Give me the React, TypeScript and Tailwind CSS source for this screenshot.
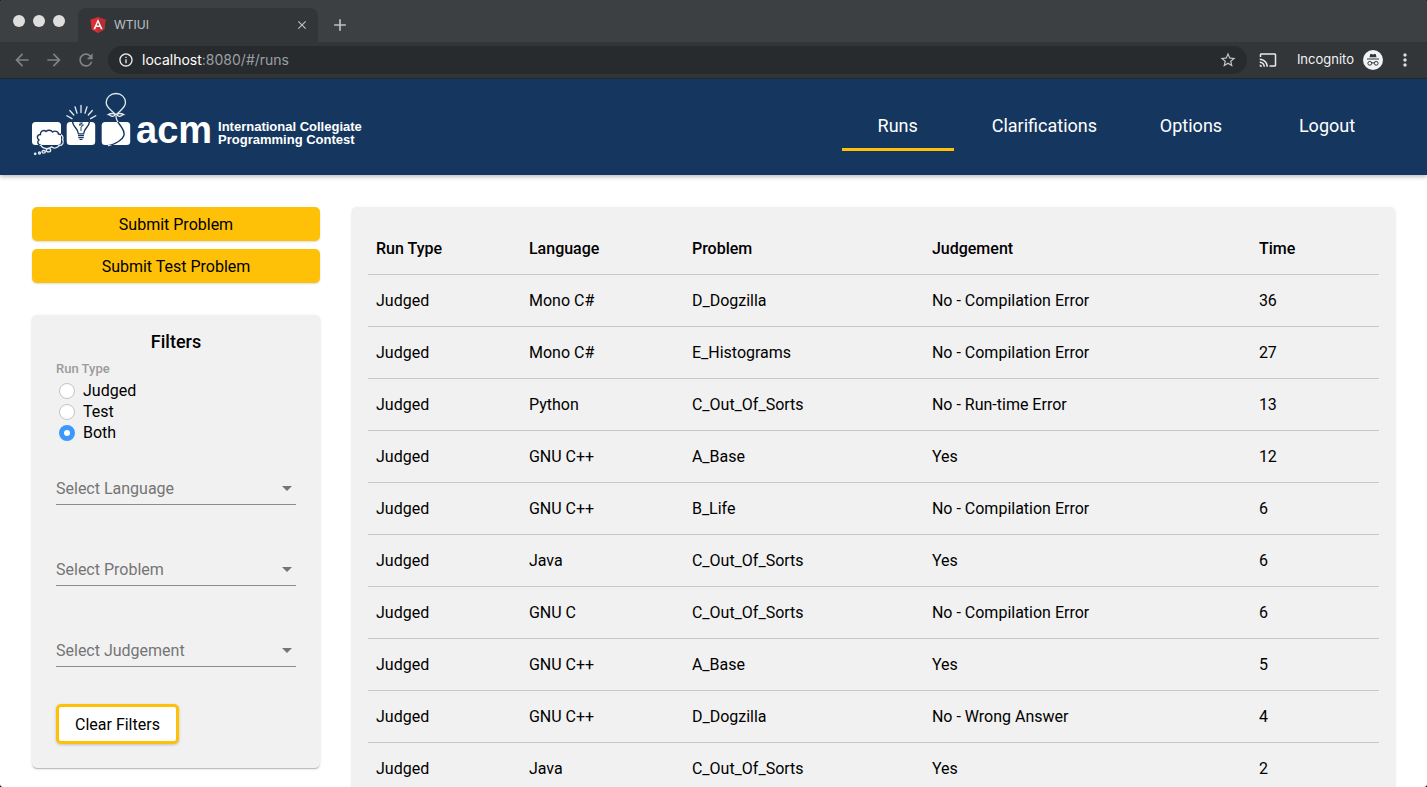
import { useState } from 'react';
import {
  MdAdd,
  MdArrowBack,
  MdArrowForward,
  MdCast,
  MdClose,
  MdInfoOutline,
  MdMoreVert,
  MdRefresh,
  MdStarBorder,
} from 'react-icons/md';

type Run = {
  type: string;
  language: string;
  problem: string;
  judgement: string;
  time: number;
};

const runs: Run[] = [
  { type: 'Judged', language: 'Mono C#', problem: 'D_Dogzilla', judgement: 'No - Compilation Error', time: 36 },
  { type: 'Judged', language: 'Mono C#', problem: 'E_Histograms', judgement: 'No - Compilation Error', time: 27 },
  { type: 'Judged', language: 'Python', problem: 'C_Out_Of_Sorts', judgement: 'No - Run-time Error', time: 13 },
  { type: 'Judged', language: 'GNU C++', problem: 'A_Base', judgement: 'Yes', time: 12 },
  { type: 'Judged', language: 'GNU C++', problem: 'B_Life', judgement: 'No - Compilation Error', time: 6 },
  { type: 'Judged', language: 'Java', problem: 'C_Out_Of_Sorts', judgement: 'Yes', time: 6 },
  { type: 'Judged', language: 'GNU C', problem: 'C_Out_Of_Sorts', judgement: 'No - Compilation Error', time: 6 },
  { type: 'Judged', language: 'GNU C++', problem: 'A_Base', judgement: 'Yes', time: 5 },
  { type: 'Judged', language: 'GNU C++', problem: 'D_Dogzilla', judgement: 'No - Wrong Answer', time: 4 },
  { type: 'Judged', language: 'Java', problem: 'C_Out_Of_Sorts', judgement: 'Yes', time: 2 },
];

const columns = [
  { title: 'Run Type', width: 'w-[15.13%]' },
  { title: 'Language', width: 'w-[16.12%]' },
  { title: 'Problem', width: 'w-[23.74%]' },
  { title: 'Judgement', width: 'w-[32.34%]' },
  { title: 'Time', width: 'w-[12.67%]' },
];

const cardStyle =
  'rounded-[5px] bg-[#f1f1f1] shadow-[0_2px_1px_-1px_rgba(0,0,0,0.12),0_1px_1px_0_rgba(0,0,0,0.1),0_1px_3px_0_rgba(0,0,0,0.12)]';

function AngularIcon() {
  return (
    <svg viewBox="0 0 16 16" className="size-4" aria-hidden="true">
      <path d="M8 0 .5 2.7l1.2 9.8L8 16l6.3-3.5 1.2-9.8z" fill="#dd2c35" />
      <path d="M8 0v16l6.3-3.5 1.2-9.8z" fill="#b92e36" />
      <path d="M8 1.9 3.4 12.2h1.8l.9-2.3h3.8l.9 2.3h1.8zM9.3 8.4H6.7L8 5.2z" fill="#fff" />
    </svg>
  );
}

function IncognitoIcon() {
  return (
    <svg viewBox="0 0 20 20" className="size-5" aria-hidden="true">
      <circle cx="10" cy="10" r="10" fill="#f1f3f4" />
      <path d="M7.3 4h1.2l1.5.4 1.5-.4h1.2l.8 3.3h-7z" fill="#323639" />
      <path d="M4 8.4h12v1.1H4z" fill="#323639" />
      <g fill="none" stroke="#323639" strokeWidth="1">
        <circle cx="6.8" cy="13.3" r="1.9" />
        <circle cx="13.2" cy="13.3" r="1.9" />
        <path d="M8.7 13.1q1.3-.7 2.6 0" />
      </g>
    </svg>
  );
}

function BrowserChrome() {
  return (
    <div className="shrink-0 border-b border-[#26292b] bg-[#323639] font-['Inter',sans-serif]">
      <div className="flex h-[42px] items-end bg-[#3c4042]">
        <div className="flex h-full w-[78px] items-center gap-2 pl-[13px]">
          <span className="size-3 rounded-full bg-[#dedede]" />
          <span className="size-3 rounded-full bg-[#dedede]" />
          <span className="size-3 rounded-full bg-[#dedede]" />
        </div>
        <div className="flex h-[34px] w-60 items-center rounded-t-lg bg-[#323639] pr-2 pl-3">
          <AngularIcon />
          <span className="ml-2 flex-1 text-xs text-[#bdc1c6]">WTIUI</span>
          <button type="button" aria-label="Close tab" className="flex size-4 items-center justify-center text-[#bdc1c6]">
            <MdClose className="size-3.5" />
          </button>
        </div>
        <button
          type="button"
          aria-label="New tab"
          className="flex h-[34px] w-11 items-center justify-center text-[#bdc1c6]"
        >
          <MdAdd className="size-5" />
        </button>
      </div>
      <div className="flex h-9 items-center pr-3 pl-3">
        <div className="flex items-center gap-3 text-[#7f8386]">
          <button type="button" aria-label="Back">
            <MdArrowBack className="size-5" />
          </button>
          <button type="button" aria-label="Forward">
            <MdArrowForward className="size-5" />
          </button>
          <button type="button" aria-label="Reload">
            <MdRefresh className="size-5" />
          </button>
        </div>
        <div className="ml-3 flex h-7 flex-1 items-center rounded-full bg-[#282b2e] px-2.5">
          <MdInfoOutline className="size-4 text-[#e8eaed]" />
          <span className="ml-2 flex-1 text-sm text-[#9aa0a6]">
            <span className="text-white">localhost</span>:8080/#/runs
          </span>
          <button type="button" aria-label="Bookmark" className="text-[#c4c7ca]">
            <MdStarBorder className="size-[18px]" />
          </button>
        </div>
        <MdCast className="ml-3 size-[18px] text-[#e8eaed]" />
        <span className="ml-5 text-[13px] text-[#f1f3f4]">Incognito</span>
        <span className="ml-[9px]">
          <IncognitoIcon />
        </span>
        <button type="button" aria-label="Menu" className="ml-3 text-[#dadce0]">
          <MdMoreVert className="size-5" />
        </button>
      </div>
    </div>
  );
}

const cloudPath =
  'M9 53.5C5.5 52.5 5 49.5 7 48C4.5 46 5 42.5 8.5 42.5C8 39 12 37.5 14 39.5C16 37.5 19.5 38 20.5 40C22.5 38.5 26.5 39 26.5 42C30 42 32 45 30.5 47.5C32.5 50 30.5 54 27 53.5C26 56 21.5 57 19.5 54.8C16.5 57.5 10.5 57 9 53.5Z';

const stringPath = 'M84 24.5C84 29 87 31 90 36C94 42 92 46 86.5 49.5C83 51.5 80 53 76.5 53.5';

function ContestLogo() {
  return (
    <div className="flex items-start gap-1 pb-1.5 text-white">
      <svg viewBox="0 0 100 64" className="h-16 w-[100px]" fill="none" aria-hidden="true">
        <defs>
          <clipPath id="tiles">
            <rect x="0" y="30" width="29" height="23" rx="3.5" />
            <rect x="34.7" y="30" width="28.5" height="23" rx="3.5" />
            <rect x="69.7" y="30" width="28.5" height="23" rx="3.5" />
          </clipPath>
        </defs>
        <g stroke="#e6ebf1" strokeWidth="1.3" strokeLinecap="round">
          <path d={cloudPath} />
          <ellipse cx="16.5" cy="58.2" rx="2.2" ry="1.7" />
          <ellipse cx="11.7" cy="59.8" rx="1.7" ry="1.3" />
          <circle cx="7.5" cy="61" r="1" />
          <circle cx="3.2" cy="61.8" r="0.7" />
          <path d="M49 13.5v7M43 14.8l2 6.4M55 14.8l-2 6.4M37.8 18.5l4 4.5M60.3 18.5l-4 4.5M34.8 23.8l5.2 2.8M63.8 23.8l-5.2 2.8" />
          <path d="M82.5 21.5C79 18 74.2 15.5 74.2 10.5C74.2 5.5 78.5 1.5 84 1.5S93.5 5.5 93.5 10.5C93.5 15.5 88.5 18 85.5 21.5" />
          <path d="M84 22.3c-2-.8-5-1.3-7.5.2 2 .2 2 2 4 1.8 1.5-.2 2.5-1.2 3.5-2 1 .8 2 1.8 3.5 2 2 .2 2-1.6 4-1.8-2.5-1.5-5.5-1-7.5-.2z" />
          <path d={stringPath} />
        </g>
        <g fill="#fff">
          <rect x="0" y="30" width="29" height="23" rx="3.5" />
          <rect x="34.7" y="30" width="28.5" height="23" rx="3.5" />
          <rect x="69.7" y="30" width="28.5" height="23" rx="3.5" />
        </g>
        <g stroke="#15375f" strokeWidth="1.4" clipPath="url(#tiles)">
          <path d={cloudPath} />
          <path d={stringPath} />
          <path d="M40.5 29.5C41 35.5 46 36 46.3 41.5M57.5 29.5C57 35.5 52 36 51.7 41.5" />
          <path d="M45.8 41.8h6.4M46 43.7h6M46.3 45.6h5.4M47.5 47.5h3" strokeWidth="1.2" />
          <path d="M47.5 31h3l-3.5 2h4.500l-2.500 2v4" strokeWidth="0.9" />
        </g>
      </svg>
      <div className="flex items-center gap-1.5 pt-4.5 font-['Liberation_Sans',sans-serif] font-bold">
        <span className="text-[38px] leading-10">acm</span>
        <span className="mt-1.5 text-[13px] leading-[13px]">
          International Collegiate
          <br />
          Programming Contest
        </span>
      </div>
    </div>
  );
}

const navItems = ['Runs', 'Clarifications', 'Options', 'Logout'];

function Header() {
  return (
    <header className="relative flex h-24 shrink-0 items-center justify-between bg-[#15375f] pr-11 pl-8 shadow-[0_2px_4px_rgba(0,0,0,0.25)]">
      <ContestLogo />
      <nav className="flex gap-6">
        {navItems.map((item) => (
          <a
            key={item}
            href={`#/${item.toLowerCase()}`}
            className={`flex h-12 min-w-28 items-center justify-center border-b-3 px-3.5 text-lg text-white ${
              item === 'Runs' ? 'border-[#ffc107]' : 'border-transparent'
            }`}
          >
            {item}
          </a>
        ))}
      </nav>
    </header>
  );
}

function SubmitButton({ label }: { label: string }) {
  return (
    <button
      type="button"
      className="h-[34px] rounded-[5px] bg-[#ffc107] pt-0.5 text-black shadow-[0_1px_2px_rgba(0,0,0,0.15)]"
    >
      {label}
    </button>
  );
}

function FilterSelect({ label }: { label: string }) {
  return (
    <div className="relative">
      <select
        aria-label={label}
        className="block h-8 w-full appearance-none border-b border-[#8c8c8c] bg-transparent pr-6 text-[#757575] outline-none"
      >
        <option>{label}</option>
      </select>
      <svg viewBox="0 0 10 5" className="pointer-events-none absolute top-[13px] right-1 h-[5px] w-2.5" aria-hidden="true">
        <path d="M0 0h10L5 5z" fill="#757575" />
      </svg>
    </div>
  );
}

function Filters() {
  const [runType, setRunType] = useState('Both');
  return (
    <section className={`${cardStyle} px-6 pt-4 pb-6`}>
      <h2 className="text-center text-lg leading-[22px] font-medium">Filters</h2>
      <fieldset className="mt-2">
        <legend className="text-[13px] leading-[15px] font-medium text-[#9b9b9b]">Run Type</legend>
        <div className="mt-1">
          {['Judged', 'Test', 'Both'].map((option) => (
            <label key={option} className="flex h-[21px] items-center gap-2 pl-[3px]">
              <input
                type="radio"
                name="runType"
                checked={runType === option}
                onChange={() => setRunType(option)}
                className="size-4 appearance-none rounded-full border border-[#c4c4c4] bg-white checked:border-[5px] checked:border-[#3b99fc]"
              />
              {option}
            </label>
          ))}
        </div>
      </fieldset>
      <div className="mt-[30px] flex flex-col gap-[49px]">
        <FilterSelect label="Select Language" />
        <FilterSelect label="Select Problem" />
        <FilterSelect label="Select Judgement" />
      </div>
      <button
        type="button"
        className="mt-[37px] block h-10 rounded-[5px] border-3 border-[#ffc107] bg-white px-4 pt-0.5 text-black shadow-[0_1px_3px_rgba(0,0,0,0.2)]"
      >
        Clear Filters
      </button>
    </section>
  );
}

function RunsTable() {
  return (
    <section className={`${cardStyle} min-w-0 flex-1 p-4`}>
      <table className="w-full table-fixed border-separate border-spacing-0 text-left">
        <thead>
          <tr>
            {columns.map((column) => (
              <th key={column.title} className={`${column.width} h-[52px] border-b border-[#c8c8c8] px-2 font-medium`}>
                {column.title}
              </th>
            ))}
          </tr>
        </thead>
        <tbody>
          {runs.map((run, index) => (
            <tr key={index}>
              {[run.type, run.language, run.problem, run.judgement, run.time].map((value, cell) => (
                <td key={cell} className="h-[52px] border-b border-[#c8c8c8] px-2">
                  {value}
                </td>
              ))}
            </tr>
          ))}
        </tbody>
      </table>
    </section>
  );
}

export default function App() {
  return (
    <div className="h-screen bg-black">
      <div className="flex h-full flex-col overflow-hidden rounded-[3px] bg-white font-['Roboto',sans-serif] text-base text-black">
        <BrowserChrome />
        <Header />
        <main className="flex min-h-0 flex-1 items-start gap-8 overflow-hidden p-8">
          <aside className="flex w-72 shrink-0 flex-col">
            <div className="flex flex-col gap-2 pb-8">
              <SubmitButton label="Submit Problem" />
              <SubmitButton label="Submit Test Problem" />
            </div>
            <Filters />
          </aside>
          <RunsTable />
        </main>
      </div>
    </div>
  );
}
